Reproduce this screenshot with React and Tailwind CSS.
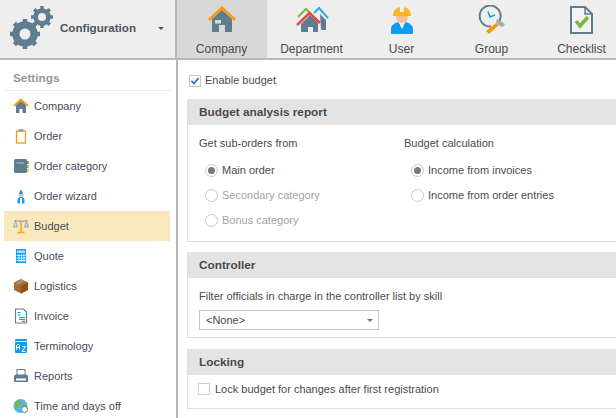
const Gears = () => (
  <svg width="44" height="46" viewBox="0 0 44 46">
    <circle cx="15" cy="28" r="9.500" fill="none" stroke="#5f7d8f" strokeWidth="6.500" />
    <path d="M15 13v30M0 28h30M4.400 17.400l21.200 21.200M4.400 38.600l21.200-21.200" stroke="#5f7d8f" strokeWidth="4.500" />
    <circle cx="15" cy="28" r="5.500" fill="#eeeeee" />
    <circle cx="32" cy="11" r="6.500" fill="none" stroke="#5f7d8f" strokeWidth="4.500" />
    <path d="M32 0v22M21 11h22M24.200 3.200l15.600 15.600M24.200 18.800l15.600-15.600" stroke="#5f7d8f" strokeWidth="3.500" />
    <circle cx="32" cy="11" r="4" fill="#eeeeee" />
  </svg>
);

const HouseBig = () => (
  <svg width="30" height="30" viewBox="0 0 30 30">
    <path d="M5 14 15 5l10 9v13h-7v-7h-6v7H5z" fill="#5f7d8f" />
    <rect x="8" y="15" width="6" height="3.500" fill="#d8d8d8" />
    <path d="M2 15 15 3l13 12" fill="none" stroke="#f79a12" strokeWidth="2.800" />
  </svg>
);

const Department = () => (
  <svg width="36" height="30" viewBox="0 0 36 30">
    <path d="M4 12 12 4l5 5" fill="none" stroke="#7ab648" strokeWidth="2" />
    <path d="M20 8l5-5 9 10" fill="none" stroke="#29a9ea" strokeWidth="2" />
    <path d="M26 9l6 6v10h-5z" fill="#5f7d8f" />
    <path d="M7 19l9-9 8 8v9h-5v-5h-5v5H7z" fill="#5f7d8f" />
    <path d="M3 20 15.500 8 26 18" fill="none" stroke="#e2483d" strokeWidth="2.500" />
  </svg>
);

const Worker = () => (
  <svg width="24" height="30" viewBox="0 0 24 30">
    <path d="M1 29v-5c0-4 4-6 7-7l4 5 4-5c3 1 7 3 7 7v5z" fill="#0f9df0" />
    <path d="M10 20l2 4 2-4z" fill="#ffffff" />
    <circle cx="12" cy="12" r="6" fill="#f6c08e" />
    <path d="M3 11C3 5 7 2 12 2s9 3 9 9z" fill="#f9b52c" />
    <rect x="10" y="2" width="4" height="5" fill="#fff2cf" />
  </svg>
);

const Group = () => (
  <svg width="30" height="30" viewBox="0 0 30 30">
    <path d="M21 18a10.500 10.500 0 1 0-7 3.500" fill="none" stroke="#5f7d8f" strokeWidth="2" />
    <path d="M11 6.500 13 12l5-2" fill="none" stroke="#0f9df0" strokeWidth="1.500" />
    <path d="M20 14l8 5-2 3-3-1-2-2-2-2z" fill="#a2adb3" />
    <path d="M19 18l3 2-10 9-3-3z" fill="#f79a12" />
  </svg>
);

const Checklist = () => (
  <svg width="25" height="30" viewBox="0 0 25 30">
    <path d="M2 2h14l7 7v19H2z" fill="#ffffff" fillOpacity="0.300" stroke="#5f7d8f" strokeWidth="2" />
    <path d="M16 2v7h7" fill="none" stroke="#5f7d8f" strokeWidth="1.500" />
    <path d="M7 16l4 5 8-9" fill="none" stroke="#7ab648" strokeWidth="3.500" />
  </svg>
);

const HouseSmall = () => (
  <svg width="16" height="16" viewBox="0 0 16 16">
    <path d="M3 7l5-4 5 4v8H9.500v-4h-3v4H3z" fill="#5f7d8f" />
    <path d="M1 8l7-6.500L15 8" fill="none" stroke="#f79a12" strokeWidth="1.800" />
  </svg>
);

const Clipboard = () => (
  <svg width="16" height="16" viewBox="0 0 16 16">
    <rect x="3.500" y="3" width="9" height="12" fill="#ffffff" stroke="#f79a12" strokeWidth="1.300" />
    <rect x="5.500" y="1" width="5" height="3" fill="#a2adb3" />
  </svg>
);

const Book = () => (
  <svg width="16" height="16" viewBox="0 0 16 16">
    <rect x="1" y="1" width="13" height="14" rx="1.500" fill="#5f7d8f" />
    <rect x="3.500" y="4" width="7.500" height="2" fill="#8ba1ae" />
    <rect x="14" y="3" width="1.500" height="3" fill="#e2483d" />
    <rect x="14" y="7" width="1.500" height="3" fill="#7ab648" />
    <rect x="14" y="11" width="1.500" height="3" fill="#f9b52c" />
  </svg>
);

const Wizard = () => (
  <svg width="16" height="16" viewBox="0 0 16 16">
    <path d="M8 1 10.500 6.500h-5z" fill="#0f9df0" />
    <rect x="5.500" y="6.500" width="5" height="2.500" fill="#f6c08e" />
    <path d="M4.500 15.500v-3.500c0-2 1.500-3 3.500-3s3.500 1 3.500 3v3.500z" fill="#0f9df0" />
    <rect x="7" y="10" width="2" height="5.500" fill="#ffffff" />
  </svg>
);

const Scales = () => (
  <svg width="16" height="16" viewBox="0 0 16 16">
    <path d="M1.500 2.500 8 3.500l6.500-1" stroke="#8a979f" strokeWidth="1" fill="none" />
    <path d="M0.500 9 2.500 3l2 6zM11.500 9l2-6 2 6z" fill="#d9dde0" stroke="#8a979f" strokeWidth="0.800" />
    <path d="M8 2v12M4.500 14.500h7" stroke="#f5a623" strokeWidth="1.600" fill="none" />
  </svg>
);

const Calculator = () => (
  <svg width="16" height="16" viewBox="0 0 16 16">
    <rect x="3" y="1" width="10" height="14" fill="#0f9df0" />
    <rect x="4" y="2.500" width="8" height="2.500" fill="#b8d9ec" />
    <path d="M3.500 7.500h9M3.500 10h9M3.500 12.500h9M6 6v8M8.500 6v8M11 6v8" stroke="#ffffff" strokeWidth="0.800" />
  </svg>
);

const Box = () => (
  <svg width="16" height="16" viewBox="0 0 16 16">
    <path d="M1 4.500 8 1l7 3.500v7.500L8 15.500 1 12z" fill="#a96a2b" />
    <path d="M8 8l7-3.500v7.500L8 15.500z" fill="#8a5420" />
    <path d="M4 6l6-3.500" stroke="#9aa5ab" strokeWidth="2" />
  </svg>
);

const InvoiceIcon = () => (
  <svg width="16" height="16" viewBox="0 0 16 16">
    <path d="M2.500 1h8l3 3v11h-11z" fill="#ffffff" stroke="#5f7d8f" strokeWidth="1.100" />
    <path d="M4.500 4.500h3M4.500 7h3M6 9.500h6" stroke="#0f9df0" strokeWidth="1.100" />
    <path d="M6 11.500h6" stroke="#0f9df0" strokeWidth="1.100" />
    <path d="M9 13.300h3" stroke="#e2483d" strokeWidth="1.100" />
  </svg>
);

const AzIcon = () => (
  <svg width="16" height="16" viewBox="0 0 16 16">
    <rect x="2" y="1" width="12" height="14" rx="1" fill="#0f9df0" />
    <path d="M2 3.500h12" stroke="#ffffff" strokeWidth="0.800" />
    <path d="M3.500 11.500V7.500l1-1h1l1 1v4M3.500 9.500h3M9 8.500h3.500L9 13.500h3.500" fill="none" stroke="#ffffff" strokeWidth="1" />
  </svg>
);

const Printer = () => (
  <svg width="16" height="16" viewBox="0 0 16 16">
    <rect x="4" y="1.500" width="8" height="6" fill="#ffffff" stroke="#5f7d8f" />
    <path d="M1 8.500q0-2 2-2h10q2 0 2 2V14H1z" fill="#5f7d8f" />
    <rect x="3" y="10.500" width="10" height="2" fill="#ffffff" />
  </svg>
);

const Globe = () => (
  <svg width="16" height="16" viewBox="0 0 16 16">
    <circle cx="7.500" cy="8" r="7" fill="#58b4e0" />
    <path d="M3 3c3-1 5 0 5 2s-3 2-3 4-3 0-4-1zM9 7l5-1 0 4-4 3z" fill="#7ab648" />
    <circle cx="11.500" cy="11.500" r="3" fill="#ffffff" stroke="#5f7d8f" />
  </svg>
);

const tabs = [
  { label: "Company", icon: <HouseBig />, active: true },
  { label: "Department", icon: <Department /> },
  { label: "User", icon: <Worker /> },
  { label: "Group", icon: <Group /> },
  { label: "Checklist", icon: <Checklist /> },
];

const menu = [
  { label: "Company", icon: <HouseSmall /> },
  { label: "Order", icon: <Clipboard /> },
  { label: "Order category", icon: <Book /> },
  { label: "Order wizard", icon: <Wizard /> },
  { label: "Budget", icon: <Scales />, active: true },
  { label: "Quote", icon: <Calculator /> },
  { label: "Logistics", icon: <Box /> },
  { label: "Invoice", icon: <InvoiceIcon /> },
  { label: "Terminology", icon: <AzIcon /> },
  { label: "Reports", icon: <Printer /> },
  { label: "Time and days off", icon: <Globe /> },
];

const Radio = ({ label, checked, disabled }) => (
  <div className={`flex h-[25px] items-center gap-[4px] ${disabled ? "text-[#a3a3a3]" : "text-[#4a4a4a]"}`}>
    <span className="flex size-[13px] items-center justify-center rounded-full border border-[#c8c8c8] bg-white">
      {checked && <span className="size-[7px] rounded-full bg-[#7a7a7a]" />}
    </span>
    {label}
  </div>
);

const Section = ({ title, className, children }) => (
  <section className={`ml-[9px] w-[460px] border border-t-0 border-[#e0e0e0] ${className}`}>
    <h3 className="flex h-[26px] items-center bg-[#e3e3e3] pl-[11px] pt-[2px] text-[11.8px] font-bold text-[#4a4a4a]">{title}</h3>
    {children}
  </section>
);

export default function App() {
  return (
    <div className="flex h-[418px] w-[616px] flex-col overflow-hidden bg-white font-['Liberation_Sans',sans-serif] text-[11px] text-[#4a4a4a]">
      {/* Top ribbon */}
      <header className="flex h-[60px] shrink-0 border-b-2 border-[#b8b8b8] bg-[#eeeeee]">
        <div className="flex w-[177px] shrink-0 items-center border-r-2 border-[#b8b8b8] pl-[10px]">
          <Gears />
          <span className="ml-[6px] mb-[2px] text-[11.6px] font-bold text-[#4a5560]">Configuration</span>
          <span className="ml-[22px] mb-[2px] border-x-[3px] border-t-[3px] border-x-transparent border-t-[#555555]" />
        </div>
        {tabs.map((t) => (
          <div
            key={t.label}
            className={`flex w-[90px] shrink-0 flex-col items-center pt-[5px] pr-[1px] text-xs ${t.active ? "bg-[#d8d8d8]" : ""}`}
          >
            <div className="flex h-[30px] items-center">{t.icon}</div>
            <span className="mt-[6px]">{t.label}</span>
          </div>
        ))}
      </header>

      <div className="flex min-h-0 flex-1">
        {/* Left menu */}
        <aside className="w-[178px] shrink-0 border-r-2 border-[#b8b8b8] pl-1 pr-1.5">
          <div className="mx-[-1px] flex h-[31px] items-center border-b border-[#ececec] pl-[10px] pt-[8px] text-[11.8px] font-bold text-[#969696]">
            Settings
          </div>
          {menu.map((m) => (
            <div key={m.label} className={`flex h-[30px] items-center gap-[5px] pl-[9px] ${m.active ? "bg-[#f9e8bd]" : ""}`}>
              {m.icon}
              <span className="text-[#4b4b5c]">{m.label}</span>
            </div>
          ))}
        </aside>

        {/* Budget settings */}
        <main className="min-w-0 flex-1 overflow-hidden">
          <label className="ml-[11px] flex h-[39px] items-center gap-[4px] pt-[2px]">
            <span className="flex size-3 items-center justify-center border border-[#c8c8c8] bg-white">
              <svg width="10" height="10" viewBox="0 0 10 10">
                <path d="M1.500 5 4 7.500 8.500 2" fill="none" stroke="#2a72d5" strokeWidth="1.800" />
              </svg>
            </span>
            Enable budget
          </label>

          <Section title="Budget analysis report" className="h-[143px]">
            <div className="flex pl-[11px] pt-[10px]">
              <div className="w-[205px]">
                <div className="mb-[7px] flex h-[16px] items-center">Get sub-orders from</div>
                <div className="pl-[6px]">
                  <Radio label="Main order" checked />
                  <Radio label="Secondary category" disabled />
                  <Radio label="Bonus category" disabled />
                </div>
              </div>
              <div>
                <div className="mb-[7px] flex h-[16px] items-center">Budget calculation</div>
                <div className="pl-[7px]">
                  <Radio label="Income from invoices" checked />
                  <Radio label="Income from order entries" />
                </div>
              </div>
            </div>
          </Section>

          <Section title="Controller" className="mt-[10px] h-[86px]">
            <div className="pl-[11px] pt-[10px]">
              <div className="flex h-[16px] items-center">Filter officials in charge in the controller list by skill</div>
              <div className="mt-[6px] flex h-[20px] w-[180px] items-center justify-between border border-[#c4c4c4] bg-white pl-[6px] pr-[5px]">
                &lt;None&gt;
                <span className="border-x-[3px] border-t-[3px] border-x-transparent border-t-[#777777]" />
              </div>
            </div>
          </Section>

          <Section title="Locking" className="mt-[11px] h-[60px]">
            <div className="flex items-center gap-[5px] pl-[10px] pt-[6px]">
              <span className="size-3 border border-[#d0d0d0] bg-white" />
              Lock budget for changes after first registration
            </div>
          </Section>
        </main>
      </div>
    </div>
  );
}
